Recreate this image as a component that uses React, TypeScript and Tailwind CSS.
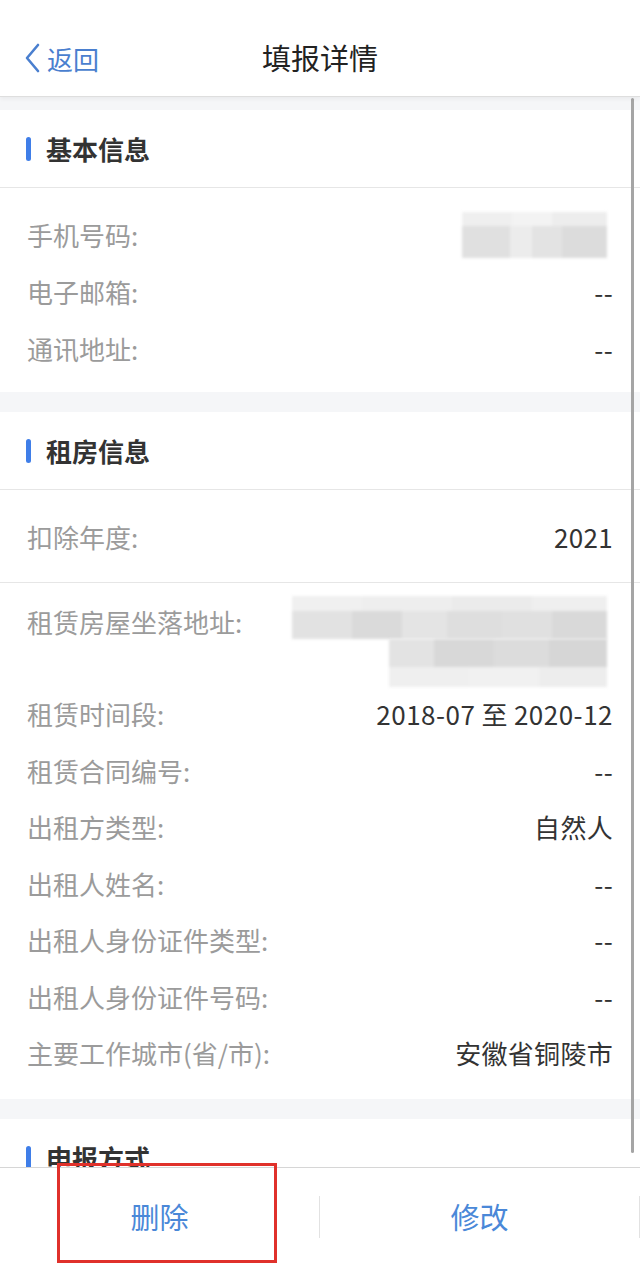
import React from "react";

type Row = { label: string; value?: string; blur?: "phone" };

const BASIC: Row[] = [
  { label: "手机号码:", blur: "phone" },
  { label: "电子邮箱:", value: "--" },
  { label: "通讯地址:", value: "--" },
];

const RENT: Row[] = [
  { label: "租赁时间段:", value: "2018-07 至 2020-12" },
  { label: "租赁合同编号:", value: "--" },
  { label: "出租方类型:", value: "自然人" },
  { label: "出租人姓名:", value: "--" },
  { label: "出租人身份证件类型:", value: "--" },
  { label: "出租人身份证件号码:", value: "--" },
  { label: "主要工作城市(省/市):", value: "安徽省铜陵市" },
];

// mosaic used where the screenshot was redacted
function Mosaic({ rows, className }: { rows: { h: number; cells: [number, string][] }[]; className?: string }) {
  return (
    <div className={`flex flex-col blur-[1.5px] ${className ?? ""}`}>
      {rows.map((r, i) => (
        <div key={i} className="flex" style={{ height: r.h }}>
          {r.cells.map(([w, c], j) => (
            <div key={j} style={{ width: w, background: c }} />
          ))}
        </div>
      ))}
    </div>
  );
}

function SectionTitle({ title }: { title: string }) {
  return (
    <div className="flex h-[78px] items-center border-b border-[#e6e6e6] pl-[26px]">
      <span className="mr-[15px] h-[24px] w-[5px] rounded-full bg-[#3f7ee8]" />
      <span className="text-[26px] font-semibold text-[#333]">{title}</span>
    </div>
  );
}

function Line({ row, h }: { row: Row; h: string }) {
  return (
    <div className={`flex items-center justify-between px-[27px] ${h}`}>
      <span className="text-[26px] text-[#9b9b9b]">{row.label}</span>
      {row.blur === "phone" ? (
        <Mosaic
          className="mr-[6px]"
          rows={[
            { h: 14, cells: [[50, "#efefef"], [40, "#f3f3f3"], [55, "#ededed"]] },
            { h: 32, cells: [[48, "#e0e0e0"], [22, "#ececec"], [30, "#e3e3e3"], [45, "#dcdcdc"]] },
          ]}
        />
      ) : (
        <span className="text-[26px] tracking-[0.3px] text-[#333]">{row.value}</span>
      )}
    </div>
  );
}

export default function App() {
  return (
    <div className="relative flex h-[1266px] w-[640px] flex-col overflow-hidden bg-white font-['Noto_Sans_CJK_SC','Noto_Sans',sans-serif]">
      <header className="z-10 grid h-[97px] shrink-0 grid-cols-[1fr_auto_1fr] items-center border-b border-[#dedede] bg-white pt-[20px] shadow-[0_2px_4px_rgba(0,0,0,0.05)]">
        <button className="flex items-center gap-[6px] justify-self-start pl-[24px] text-[26px] text-[#4a7fcf]">
          <svg width="17" height="30" viewBox="0 0 17 30" fill="none">
            <path d="M14 2 L3 15 L14 28" stroke="#4a7fcf" strokeWidth="2.6" strokeLinecap="round" strokeLinejoin="round" />
          </svg>
          返回
        </button>
        <h1 className="text-[29px] font-normal text-[#222]">填报详情</h1>
        <div />
      </header>

      <main className="relative flex-1 overflow-hidden bg-[#f5f6f8] pt-[13px]">
        <section className="bg-white">
          <SectionTitle title="基本信息" />
          <div className="pb-[15px] pt-[18px]">
            {BASIC.map((r) => (
              <Line key={r.label} row={r} h="h-[57px]" />
            ))}
          </div>
        </section>

        <section className="mt-[20px] bg-white">
          <SectionTitle title="租房信息" />
          <div className="flex h-[93px] items-center justify-between border-b border-[#e6e6e6] px-[27px]">
            <span className="text-[26px] text-[#9b9b9b]">扣除年度:</span>
            <span className="text-[26px] tracking-[0.3px] text-[#333]">2021</span>
          </div>
          <div className="pb-[18px] pt-[10px]">
            <div className="flex h-[92.5px] items-start justify-between px-[27px]">
              <span className="text-[26px] leading-[58px] text-[#9b9b9b]">租赁房屋坐落地址:</span>
              <div className="mr-[6px] mt-[3px] flex flex-col items-end">
                <Mosaic
                  rows={[
                    { h: 15, cells: [[70, "#f0f0f0"], [90, "#eeeeee"], [80, "#ebebeb"], [75, "#efefef"]] },
                    { h: 28, cells: [[60, "#e2e2e2"], [50, "#dadada"], [45, "#e4e4e4"], [55, "#dedede"], [50, "#e0e0e0"], [55, "#d9d9d9"]] },
                  ]}
                />
                <Mosaic
                  rows={[
                    { h: 28, cells: [[45, "#e3e3e3"], [60, "#d8d8d8"], [55, "#dcdcdc"], [58, "#d6d6d6"]] },
                    { h: 20, cells: [[80, "#efefef"], [70, "#f1f1f1"], [68, "#ededed"]] },
                  ]}
                />
              </div>
            </div>
            {RENT.map((r) =>
              r.label === "租赁时间段:" ? (
                <div key={r.label} className="flex h-[56.5px] items-center justify-between px-[27px]">
                  <span className="text-[26px] text-[#9b9b9b]">{r.label}</span>
                  <span className="text-[26px] tracking-[0.5px] text-[#333]">
                    2018-07<span className="px-[6px]">至</span>2020-12
                  </span>
                </div>
              ) : (
                <Line key={r.label} row={r} h="h-[56.5px]" />
              )
            )}
          </div>
        </section>

        <section className="mt-[20px] bg-white">
          <SectionTitle title="申报方式" />
        </section>

        <div className="absolute right-[6px] top-[1px] h-[1055px] w-[3px] rounded-full bg-[#a5a5a5]" />
      </main>

      <footer className="flex h-[99px] shrink-0 items-center border-t border-[#d6d6d6] bg-white">
        <button className="flex h-[42px] flex-1 items-center justify-center border-r border-[#e2e2e2] text-[29px] text-[#4a88d8]">
          删除
        </button>
        <button className="flex h-[42px] flex-1 items-center justify-center border-r border-[#e2e2e2] text-[29px] text-[#4a88d8]">
          修改
        </button>
      </footer>

      <div className="pointer-events-none absolute left-[57px] top-[1163px] h-[100px] w-[220px] border-[3px] border-[#e0312b]" />
    </div>
  );
}
